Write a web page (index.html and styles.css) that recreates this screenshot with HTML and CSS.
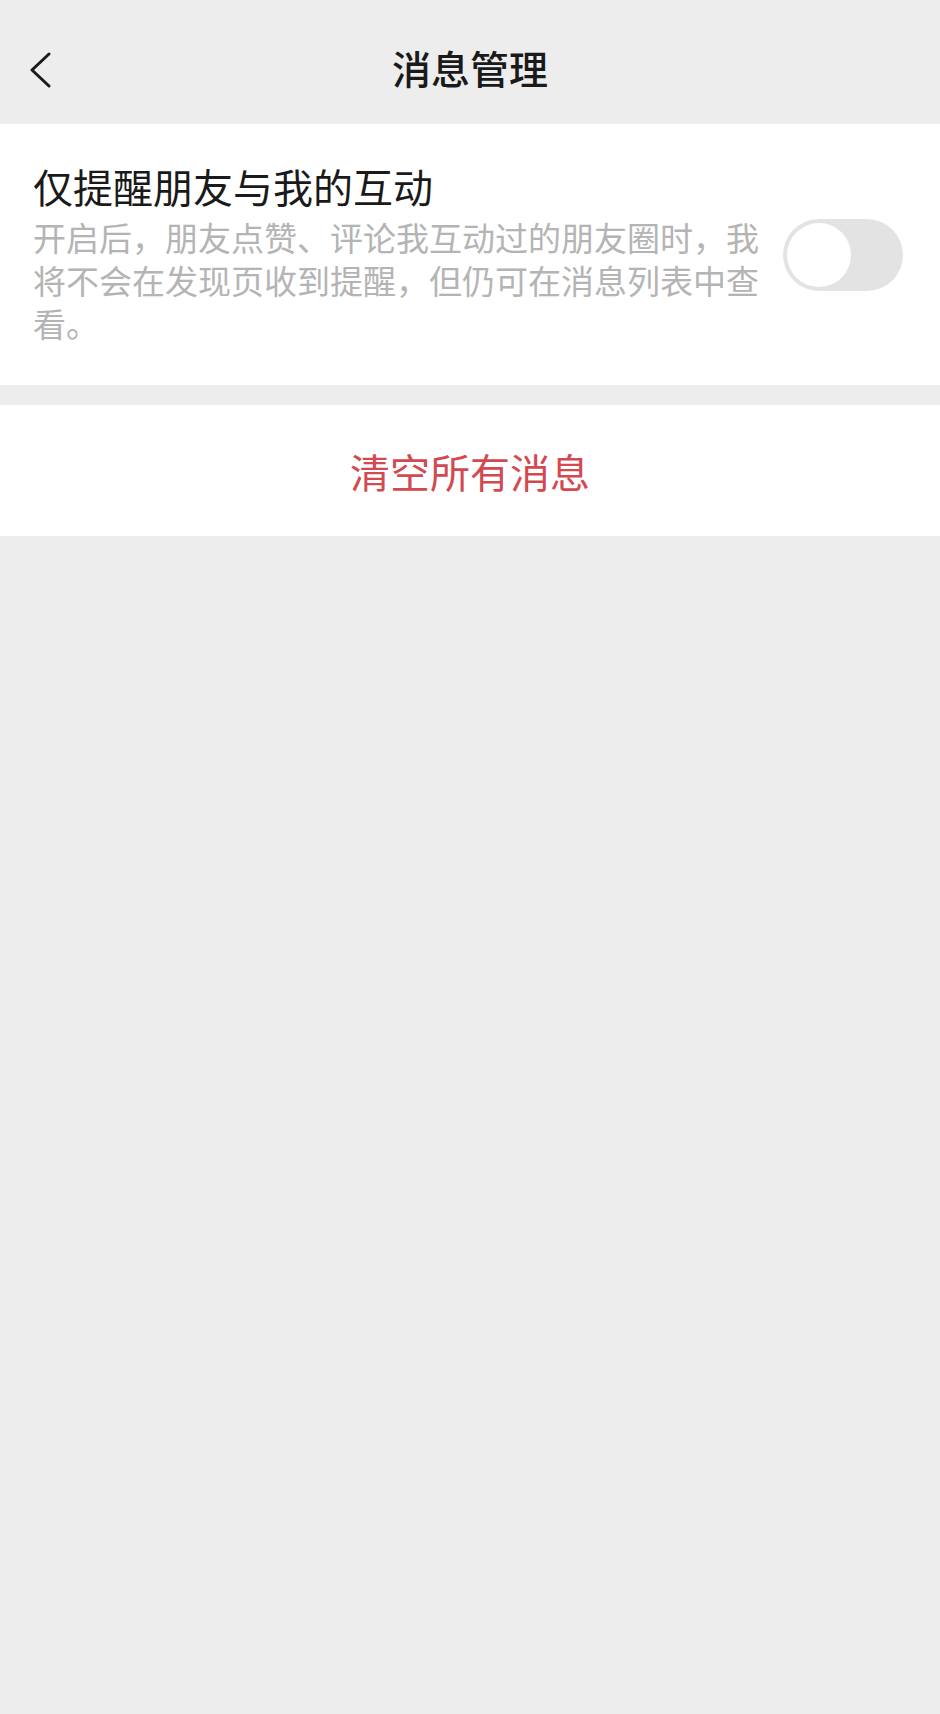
FILE: index.html
```html
<!DOCTYPE html>
<html lang="zh-CN">
<head>
<meta charset="utf-8">
<title>消息管理</title>
<link rel="stylesheet" href="styles.css">
</head>
<body>
<div class="page">
  <header class="nav">
    <span class="back">
      <svg width="26" height="36" viewBox="0 0 26 36"><path d="M22 2 L5 18 L22 34" fill="none" stroke="#1a1a1a" stroke-width="3" stroke-linecap="round" stroke-linejoin="round"/></svg>
    </span>
    <h1 class="nav-title">消息管理</h1>
  </header>
  <section class="card setting">
    <div class="setting-text">
      <div class="setting-title">仅提醒朋友与我的互动</div>
      <div class="setting-desc">开启后，朋友点赞、评论我互动过的朋友圈时，我将不会在发现页收到提醒，但仍可在消息列表中查看。</div>
    </div>
    <div class="switch"><span class="knob"></span></div>
  </section>
  <section class="card action">清空所有消息</section>
</div>
</body>
</html>
```
FILE: styles.css
```css
html, body {
  margin: 0;
  padding: 0;
  background: #ededed;
}
body {
  font-family: "Noto Sans CJK SC", "Noto Sans", sans-serif;
  width: 940px;
  height: 1714px;
  overflow: hidden;
}
.page {
  display: flex;
  flex-direction: column;
}
.nav {
  height: 124px;
  position: relative;
  display: flex;
  align-items: center;
  justify-content: center;
}
.back {
  position: absolute;
  left: 27px;
  top: 52px;
  width: 26px;
  height: 36px;
}
.back svg { display: block; }
.nav-title {
  margin: 0;
  font-size: 39px;
  font-weight: 500;
  color: #1a1a1a;
  line-height: 1;
  margin-top: 10px;
}
.card {
  background: #fff;
}
.setting {
  display: flex;
  align-items: center;
  padding: 42px 37px 46px 33px;
  gap: 18px;
  height: 261px;
  box-sizing: border-box;
}
.setting-text {
  flex: 1;
}
.setting-title {
  font-size: 40px;
  color: #1a1a1a;
  line-height: 52px;
}
.setting-desc {
  font-size: 33px;
  color: #b4b4b4;
  line-height: 43px;
  margin-top: 4px;
}
.switch {
  width: 120px;
  height: 72px;
  border-radius: 36px;
  background: #e3e3e3;
  position: relative;
  flex: none;
  margin-top: 4px;
}
.knob {
  position: absolute;
  left: 4px;
  top: 4px;
  width: 64px;
  height: 64px;
  border-radius: 50%;
  background: #fff;
}
.action {
  margin-top: 20px;
  height: 131px;
  display: flex;
  align-items: center;
  justify-content: center;
  font-size: 40px;
  color: #d24a50;
}
```
